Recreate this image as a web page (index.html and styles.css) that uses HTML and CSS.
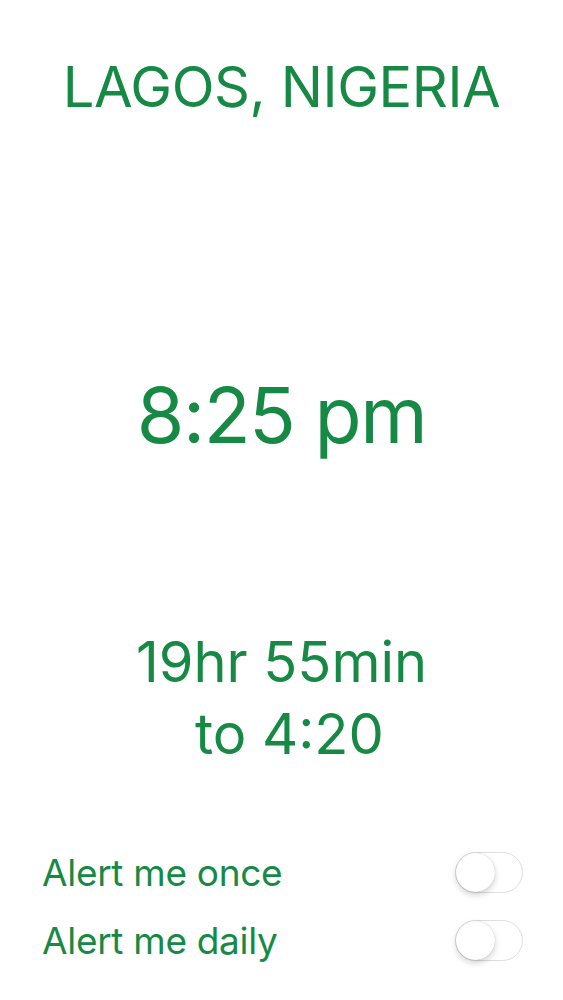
FILE: index.html
```html
<!DOCTYPE html>
<html>
<head>
    <title>Lagos Time</title>
    <link rel="stylesheet" href="styles.css">
</head>
<body>
    <div class="screen">
        <h1 class="city">LAGOS, NIGERIA</h1>

        <div class="clock">8:25 pm</div>

        <div class="countdown">19hr 55min<br>&nbsp;to 4:20</div>

        <div class="alerts">
            <div class="alert-row">
                <span class="alert-label">Alert me once</span>
                <span class="toggle"><span class="knob"></span></span>
            </div>
            <div class="alert-row">
                <span class="alert-label">Alert me daily</span>
                <span class="toggle"><span class="knob"></span></span>
            </div>
        </div>
    </div>
</body>
</html>
```

FILE: styles.css
```css
body {
    margin: 0;
    background-color: #ffffff;
    font-family: Inter, 'Liberation Sans', sans-serif;
    color: #168a44;
}
.screen {
    height: 1000px;
    display: flex;
    flex-direction: column;
    align-items: center;
    box-sizing: border-box;
    padding-top: 52px;
}
.city {
    margin: 0;
    font-size: 56px;
    font-weight: 400;
    line-height: 70px;
    letter-spacing: -0.4px;
}
.clock {
    margin-top: 248px;
    font-size: 77px;
    line-height: 90px;
    letter-spacing: -1.5px;
}
.countdown {
    margin-top: 166px;
    font-size: 56px;
    line-height: 72px;
    text-align: center;
}
.alerts {
    align-self: stretch;
    margin-top: 82px;
    padding: 0 40px 0 42px;
    display: flex;
    flex-direction: column;
    gap: 27px;
}
.alert-row {
    display: flex;
    justify-content: space-between;
    align-items: center;
}
.alert-label {
    font-size: 37px;
    line-height: 41px;
    letter-spacing: -0.3px;
}
.toggle {
    width: 66px;
    height: 39px;
    border: 1px solid #dedede;
    border-radius: 21px;
    background-color: #ffffff;
    position: relative;
}
.knob {
    position: absolute;
    left: 0;
    top: 0;
    width: 39px;
    height: 39px;
    border-radius: 50%;
    background-color: #ffffff;
    box-shadow: 0 3px 6px rgba(0,0,0,0.18), 0 0 1px rgba(0,0,0,0.25);
}
```
